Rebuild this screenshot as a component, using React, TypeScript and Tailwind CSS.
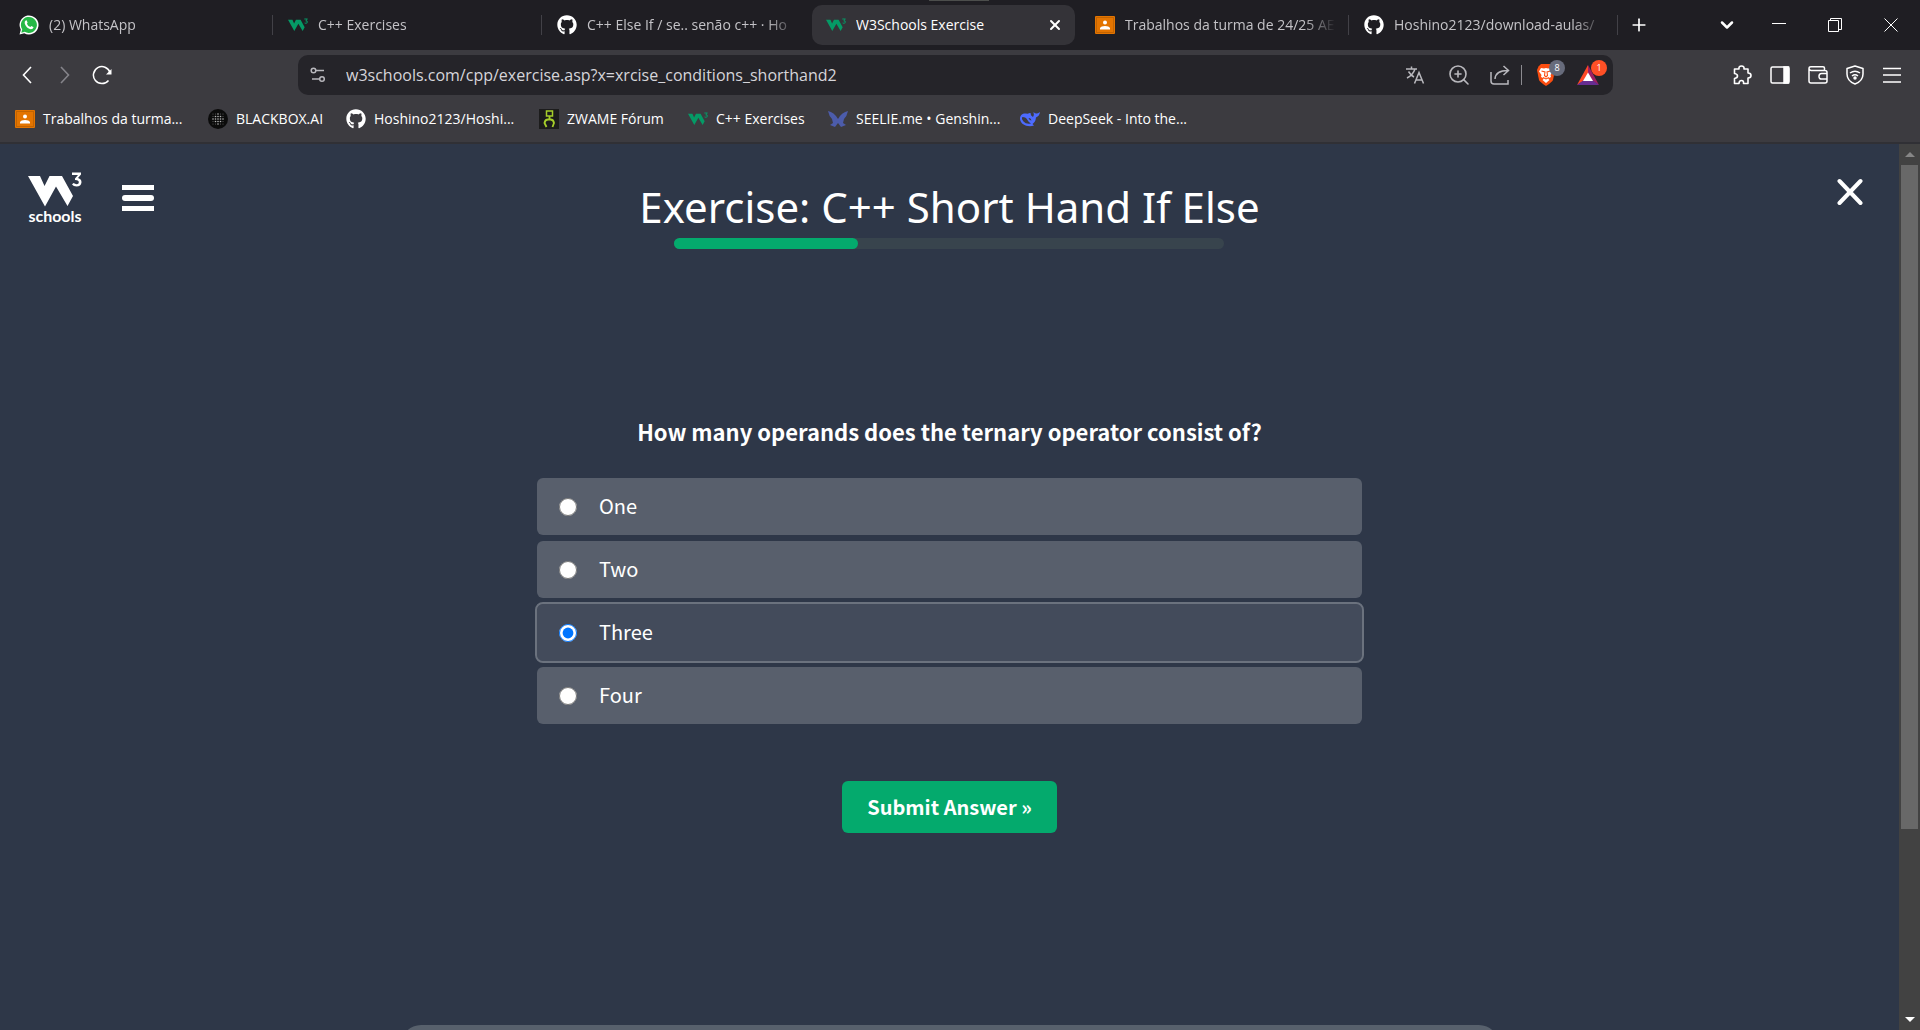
import { FaGithub } from "react-icons/fa";
import { ChevronDown, X, Plus, ZoomIn } from "lucide-react";
import type { ReactNode } from "react";

function W3Mark({ className }: { className?: string }) {
  return (
    <svg viewBox="0 0 54 36" className={className} fill="currentColor" aria-hidden="true">
      <path d="M0 4H12L16.500 14L21.500 4H34L45 24L39.500 34L28 14.500L17 34.500Z" />
      <path d="M44 0.500H53V2.500L50 6Q53.500 7 53.500 10.200Q53 14.500 48.500 14.500Q45.500 14.500 44 12.500L45.500 11Q48.500 13 50.500 11.500Q52 8 47 8V6.500L50 3H44Z" />
    </svg>
  );
}

function GreenW3() {
  return <W3Mark className="h-4 w-5 text-[#059a66]" />;
}

function WhatsAppIcon() {
  return (
    <svg viewBox="0 0 20 20" className="size-5" aria-hidden="true">
      <path d="M0.500 19.500L1.800 14.700A9.500 9.500 0 1 1 5.300 18.200Z" fill="#fff" />
      <path d="M2.300 17.700L3.200 14.300A8 8 0 1 1 5.800 16.800Z" fill="#25b846" />
      <path d="M7 5.300Q5.300 6.200 5.700 8.200C6.300 11 9 13.800 12 14.300Q14 14.300 14.500 12.500L14.300 12L12.300 11L11.400 12.100Q8.800 11.100 7.900 8.700L8.600 7.700L7.800 5.500Z" fill="#fff" />
    </svg>
  );
}

function ClassroomIcon() {
  return (
    <svg viewBox="0 0 20 18" className="h-[18px] w-5" aria-hidden="true">
      <rect width="20" height="18" rx="1" fill="#e37400" />
      <rect x="1.500" y="1.500" width="17" height="15" fill="none" stroke="#c26401" />
      <circle cx="10" cy="6.500" r="2" fill="#fff" />
      <path d="M5 13.500V12Q6 10 10 10T15 12V13.500Z" fill="#fff" />
    </svg>
  );
}

function BlackboxIcon() {
  const dots = [5, 7.5, 10, 12.5, 15];
  return (
    <svg viewBox="0 0 20 20" className="size-5" aria-hidden="true">
      <circle cx="10" cy="10" r="10" fill="#0b0b0b" />
      {dots.map((x) =>
        dots.map((y) => (
          <circle key={`${x}-${y}`} cx={x} cy={y} r={Math.abs(x - 10) + Math.abs(y - 10) > 7 ? 0.4 : 0.8} fill="#b5b5b5" />
        )),
      )}
    </svg>
  );
}

function ZwameIcon() {
  return (
    <svg viewBox="0 0 20 20" className="size-5" fill="none" stroke="#a6ce2a" strokeWidth="1.500" aria-hidden="true">
      <rect width="20" height="20" fill="#1c1c1c" stroke="none" />
      <rect x="7.500" y="2" width="6" height="5" />
      <path d="M7.500 18L5.500 14Q6 10.500 9 10.500H11.500Q14.500 10.500 15 14L13.500 18M10.500 7V10" strokeWidth="1.800" />
    </svg>
  );
}

function SeelieIcon() {
  return (
    <svg viewBox="0 0 20 18" className="h-[18px] w-5" fill="#4c5cab" aria-hidden="true">
      <path d="M0 1Q6 2 10 9Q14 2 20 1Q19 6 16 9L15 13L18 15L13 17L10 13L7 17L2 15L5 13L4 9Q1 6 0 1Z" />
    </svg>
  );
}

function DeepSeekIcon() {
  return (
    <svg viewBox="0 0 20 16" className="h-4 w-5" aria-hidden="true">
      <path d="M11 2.500Q10 4 13 6Q14.500 4.500 13.500 1Q15.500 3 17 2.500Q18.500 2 20 1Q19.500 5 16 6.500Q15.500 11 12.500 13L14 14.500Q11 15.500 8 15C3 14.500 0 11 0 7.500C0 4 3 2 6 2.500Q8 3 9.500 2Z" fill="#4d6bfe" />
      <path d="M2.500 6Q6 6 7.500 9T11 12.500Q6 13.500 3.500 10.500T2.500 6ZM8.500 7Q11 6.500 11.500 9.500Q9.500 9.500 8.500 7Z" fill="#3c3b40" />
    </svg>
  );
}

type TabItem = { icon: ReactNode; title: string; active?: boolean; divider?: boolean };

const tabs: TabItem[] = [
  { icon: <WhatsAppIcon />, title: "(2) WhatsApp", divider: true },
  { icon: <GreenW3 />, title: "C++ Exercises", divider: true },
  { icon: <FaGithub className="size-5 text-white" />, title: "C++ Else If / se.. senão c++ · Ho" },
  { icon: <GreenW3 />, title: "W3Schools Exercise", active: true },
  { icon: <ClassroomIcon />, title: "Trabalhos da turma de 24/25 AE", divider: true },
  { icon: <FaGithub className="size-5 text-white" />, title: "Hoshino2123/download-aulas/", divider: true },
];

const bookmarks = [
  { icon: <ClassroomIcon />, title: "Trabalhos da turma...", width: "w-[193px]" },
  { icon: <BlackboxIcon />, title: "BLACKBOX.AI", width: "w-[138px]" },
  { icon: <FaGithub className="size-5" />, title: "Hoshino2123/Hoshi...", width: "w-[193px]" },
  { icon: <ZwameIcon />, title: "ZWAME Fórum", width: "w-[149px]" },
  { icon: <GreenW3 />, title: "C++ Exercises", width: "w-[140px]" },
  { icon: <SeelieIcon />, title: "SEELIE.me • Genshin...", width: "w-[192px]" },
  { icon: <DeepSeekIcon />, title: "DeepSeek - Into the...", width: "w-[180px]" },
];

function TabStrip() {
  return (
    <div className="flex h-[50px] shrink-0 items-center bg-[#1f1e23]">
      <div role="tablist" className="flex min-w-0 items-center pl-[5px]">
        {tabs.map((tab, i) => (
          <div key={i} className="flex h-10 w-[269px] min-w-0 items-center">
            <div
              role="tab"
              aria-selected={!!tab.active}
              className={
                tab.active
                  ? "mr-1 flex h-10 min-w-0 flex-1 items-center rounded-[10px] bg-[#343338] pr-3 pl-[14px] text-white"
                  : "flex h-10 min-w-0 flex-1 items-center pr-3 pl-[14px] text-[#c4c3c7]"
              }
            >
              <span className="shrink-0">{tab.icon}</span>
              <span
                className={
                  tab.active
                    ? "ml-2.5 flex-1 overflow-hidden whitespace-nowrap"
                    : "ml-2.5 flex-1 overflow-hidden whitespace-nowrap [mask-image:linear-gradient(to_right,black_85%,transparent)]"
                }
              >
                {tab.title}
              </span>
              {tab.active && (
                <button aria-label="Close tab">
                  <X className="size-4" strokeWidth={3} />
                </button>
              )}
            </div>
            <span className={tab.divider ? "mr-px h-5 w-px bg-[#424147]" : "mr-px h-5 w-px"} />
          </div>
        ))}
      </div>
      <button aria-label="New tab" className="ml-2.5 text-white">
        <Plus className="size-5" strokeWidth={2} />
      </button>
      <div className="ml-auto flex items-center pr-px text-white">
        <button aria-label="Search tabs" className="flex w-12 justify-center">
          <ChevronDown className="size-5" strokeWidth={3} />
        </button>
        <button aria-label="Minimize" className="flex w-14 justify-center">
          <svg viewBox="0 0 14 14" className="size-3.5" stroke="currentColor"><path d="M0 5.500H14" /></svg>
        </button>
        <button aria-label="Restore" className="flex w-14 justify-center">
          <svg viewBox="0 0 14 14" className="size-3.5" fill="none" stroke="currentColor">
            <path d="M0.500 2.500H10.500V13.500H0.500ZM2.500 2.500V0.500H13.500V11.500H10.500" />
          </svg>
        </button>
        <button aria-label="Close window" className="flex w-14 justify-center">
          <svg viewBox="0 0 14 14" className="size-3.5" stroke="currentColor"><path d="M0.500 0.500L13.500 13.500M13.500 0.500L0.500 13.500" /></svg>
        </button>
      </div>
    </div>
  );
}

function AddressBar() {
  return (
    <div className="flex min-w-0 flex-1 items-center rounded-[10px] bg-[#252429] pr-[14px] pl-3 text-[#b9b8bd]">
      <button aria-label="View site information">
        <svg viewBox="0 0 16 16" className="size-4" fill="none" stroke="currentColor" strokeWidth="1.500">
          <circle cx="3.500" cy="3.500" r="2.300" />
          <path d="M6 3.500H14M2 12H9" />
          <circle cx="12" cy="12" r="2.300" />
        </svg>
      </button>
      <input
        aria-label="Address"
        className="ml-5 min-w-0 flex-1 bg-transparent text-base text-[#d6d5da] outline-none"
        defaultValue="w3schools.com/cpp/exercise.asp?x=xrcise_conditions_shorthand2"
      />
      <button aria-label="Translate">
        <svg viewBox="0 0 20 20" className="size-5" fill="none" stroke="currentColor" strokeWidth="1.500">
          <path d="M1 4H12M6.500 1.500V4M10 4Q8 10 2 13M3.500 6.500Q6 10.500 9 12M9.500 18.500L14 7.500L18.500 18.500M11 15H17" />
        </svg>
      </button>
      <button aria-label="Zoom" className="ml-[22px]">
        <ZoomIn className="size-6" strokeWidth={1.6} />
      </button>
      <button aria-label="Share" className="ml-[19px]">
        <svg viewBox="0 0 20 20" className="size-5" fill="none" stroke="currentColor" strokeWidth="1.500">
          <path d="M1 7V16Q1 19 4 19H18V15M5 14Q5.500 5.500 18 5.500M13.500 1L18.500 5.500L13.500 10" />
        </svg>
      </button>
      <span className="ml-[11px] h-5 w-px bg-[#8c8b90]" />
      <button aria-label="Brave Shields" className="relative ml-[14px]">
        <svg viewBox="0 0 20 24" className="h-6 w-5" aria-hidden="true">
          <path d="M5 1H15L17.500 3.500L19 7L17 17Q16 19 10 23Q4 19 3 17L1 7L2.500 3.500Z" fill="#fb4d10" />
          <path d="M5 5L8 5.500L10 5L12 5.500L15 5L17 8.500L14.500 12L15 14L12 15.500L13.500 17L10 20L6.500 17L8 15.500L5 14L5.500 12L3 8.500Z" fill="#fff" />
          <path d="M5.500 8L9 9L8.500 12.500L10 14L11.500 12.500L11 9L14.500 8M7 14.500L10 16L13 14.500" fill="none" stroke="#fb4d10" strokeWidth="1.100" />
        </svg>
        <span className="absolute -top-[3px] left-[13px] flex size-4 items-center justify-center rounded-full bg-[#676b7b] text-[9px] text-white">8</span>
      </button>
      <button aria-label="Brave Rewards" className="relative ml-[21px]">
        <svg viewBox="0 0 22 20" className="h-5 w-[22px]" aria-hidden="true">
          <path d="M11 0L0 20L11 13Z" fill="#ff4724" />
          <path d="M11 0L22 20L11 13Z" fill="#9e1f63" />
          <path d="M0 20H22L11 12Z" fill="#662d91" />
          <path d="M11 7.500L6 16H16Z" fill="#fff" />
        </svg>
        <span className="absolute -top-[5px] left-[14px] flex size-4 items-center justify-center rounded-full bg-[#ff5026] text-[9px] text-white">1</span>
      </button>
    </div>
  );
}

function Toolbar() {
  return (
    <div className="flex h-[50px] shrink-0 bg-[#3c3b40] py-[5px] pr-[18px] pl-[15px] text-white">
      <div className="flex w-[283px] items-center">
        <button aria-label="Back">
          <svg viewBox="0 0 24 24" className="size-6" fill="none" stroke="currentColor" strokeWidth="1.600"><path d="M16 4L8.500 12L16 20" /></svg>
        </button>
        <button aria-label="Forward" className="ml-[14px] text-[#85848a]">
          <svg viewBox="0 0 24 24" className="size-6" fill="none" stroke="currentColor" strokeWidth="1.600"><path d="M8 4L15.500 12L8 20" /></svg>
        </button>
        <button aria-label="Reload" className="ml-[15px]">
          <svg viewBox="0 0 20 20" className="size-5" fill="none" stroke="currentColor" strokeWidth="1.500">
            <path d="M16.500 15.500A8.500 8.500 0 1 1 18 7.500" />
            <path d="M19.500 4V9.500H14Z" fill="currentColor" stroke="none" />
          </svg>
        </button>
      </div>
      <AddressBar />
      <div className="ml-[119px] flex items-center gap-[18px]">
        <button aria-label="Extensions">
          <svg viewBox="0 0 20 20" className="size-5" fill="none" stroke="currentColor" strokeWidth="1.600">
            <path d="M3.500 4H7Q6.500 1 9.500 1T12 4H16V8Q19 8 19 10.500T16 13V18.500H11.500Q12 15.500 9.500 15.500T7 18.500H2.500V13.500Q5.500 13 5.500 11T2.500 8.500V4Z" strokeLinejoin="round" />
          </svg>
        </button>
        <button aria-label="Sidebar">
          <svg viewBox="0 0 20 20" className="size-5" fill="none" stroke="currentColor" strokeWidth="1.500">
            <rect x="1" y="2" width="18" height="16" rx="1.500" />
            <path d="M14 2H18.500V18H14Z" fill="currentColor" />
          </svg>
        </button>
        <button aria-label="Wallet">
          <svg viewBox="0 0 20 20" className="size-5" fill="none" stroke="currentColor" strokeWidth="1.500">
            <path d="M16.500 5V3Q16.500 1.800 15 1.800H3Q1 1.800 1 3.500T3 5.500H17Q19 5.500 19 7.500V16Q19 18 17 18H3Q1 18 1 16V3.500M19 8.500H13.500Q11 8.500 11 11.300T13.500 14H19" />
          </svg>
        </button>
        <button aria-label="VPN">
          <svg viewBox="0 0 18 20" className="h-5 w-[18px]" fill="none" stroke="currentColor" strokeWidth="1.500">
            <path d="M9 1L17 3.500V9Q17 16 9 19Q1 16 1 9V3.500Z" strokeLinejoin="round" />
            <path d="M4 8Q9 4.500 14 8M6 11Q9 8.500 12 11" />
            <circle cx="9" cy="13" r="1" fill="currentColor" />
          </svg>
        </button>
        <button aria-label="Menu">
          <svg viewBox="0 0 20 20" className="size-5" stroke="currentColor" strokeWidth="1.600">
            <path d="M1 3.500H19M1 10H19M1 17H19" />
          </svg>
        </button>
      </div>
    </div>
  );
}

function BookmarksBar() {
  return (
    <nav aria-label="Bookmarks" className="flex h-11 shrink-0 items-start border-b-2 border-[#303035] bg-[#3c3b40] pl-[15px] text-white">
      {bookmarks.map((b, i) => (
        <a key={i} href="#" className={`flex h-[38px] shrink-0 items-center gap-2 whitespace-nowrap ${b.width}`}>
          <span className="shrink-0">{b.icon}</span>
          {b.title}
        </a>
      ))}
    </nav>
  );
}

const options = ["One", "Two", "Three", "Four"];

function Exercise() {
  return (
    <main className="flex min-w-0 flex-1 flex-col overflow-hidden bg-[#2e3748] text-white">
      <header className="grid grid-cols-[1fr_auto_1fr] items-start px-7">
        <div className="flex items-start pt-7">
          <a href="#" aria-label="W3Schools home" className="flex w-[54px] flex-col items-center">
            <W3Mark className="h-9 w-[54px]" />
            <span className="font-['Lato',sans-serif] text-base leading-4 font-bold">schools</span>
          </a>
          <button aria-label="Open menu" className="mt-[13px] ml-10 flex w-8 flex-col gap-[5px]">
            <span className="h-[5px] w-full bg-white" />
            <span className="h-[6px] w-full rounded-sm bg-white" />
            <span className="h-[5px] w-full bg-white" />
          </button>
        </div>
        <div className="flex flex-col items-center pt-8">
          <h1 className="font-['Noto_Sans',sans-serif] text-[42px] leading-[62px] whitespace-nowrap">Exercise: C++ Short Hand If Else</h1>
          <div role="progressbar" aria-valuenow={33} aria-label="Progress" className="h-[11px] w-[550px] rounded-full bg-[#38444d]">
            <div className="h-full w-1/3 rounded-full bg-[#04aa6d]" />
          </div>
        </div>
        <button aria-label="Close exercise" className="mt-[34px] mr-2 justify-self-end">
          <svg viewBox="0 0 26 28" className="h-7 w-[26px]" stroke="currentColor" strokeWidth="4" strokeLinecap="round">
            <path d="M2.500 3L23.500 25M23.500 3L2.500 25" />
          </svg>
        </button>
      </header>

      <form className="mx-auto mt-[162px] flex w-full max-w-[825px] flex-col items-center font-['Noto_Sans_CJK_SC',sans-serif]">
        <fieldset className="w-full">
          <legend className="w-full text-center text-[22px] leading-10 font-semibold">How many operands does the ternary operator consist of?</legend>
          <div className="mt-[27px] flex flex-col gap-[6px]">
            {options.map((o) => (
              <label
                key={o}
                className="flex h-[57px] items-center rounded-[6px] bg-[#585f6c] pl-[22px] text-[20px] has-checked:bg-[#434b5b] has-checked:outline-2 has-checked:outline-[#6b727e]"
              >
                <input type="radio" name="answer" value={o} defaultChecked={o === "Three"} className="size-[18px]" />
                <span className="ml-[22px]">{o}</span>
              </label>
            ))}
          </div>
        </fieldset>
        <button type="button" className="mt-[57px] h-[52px] rounded-[6px] bg-[#04aa6d] px-[25px] text-[20px] font-semibold">
          Submit Answer »
        </button>
      </form>

      <div className="mx-auto mt-auto h-[5px] w-full max-w-[1098px] shrink-0 overflow-hidden">
        <div className="h-12 rounded-[20px] bg-[#57606c]" />
      </div>
    </main>
  );
}

function Scrollbar() {
  return (
    <div aria-hidden="true" className="flex w-[21px] shrink-0 flex-col items-center bg-[#424242]">
      <div className="flex h-[21px] w-full items-center justify-center">
        <svg viewBox="0 0 10 5" className="h-[5px] w-2.5" fill="#868686"><path d="M0 5L5 0L10 5Z" /></svg>
      </div>
      <div className="w-[17px] flex-[664] bg-[#686868]" />
      <div className="flex-[180]" />
      <div className="flex h-[21px] w-full items-center justify-center">
        <svg viewBox="0 0 10 5" className="h-[5px] w-2.5" fill="#fff"><path d="M0 0L5 5L10 0Z" /></svg>
      </div>
    </div>
  );
}

export default function App() {
  return (
    <div className="relative flex h-screen flex-col overflow-hidden font-['Open_Sans','Noto_Sans',sans-serif] text-sm">
      <span className="absolute top-0 left-[929px] h-px w-[60px] bg-[#4c4e4c]" />
      <TabStrip />
      <Toolbar />
      <BookmarksBar />
      <div className="flex min-h-0 flex-1">
        <Exercise />
        <Scrollbar />
      </div>
    </div>
  );
}
